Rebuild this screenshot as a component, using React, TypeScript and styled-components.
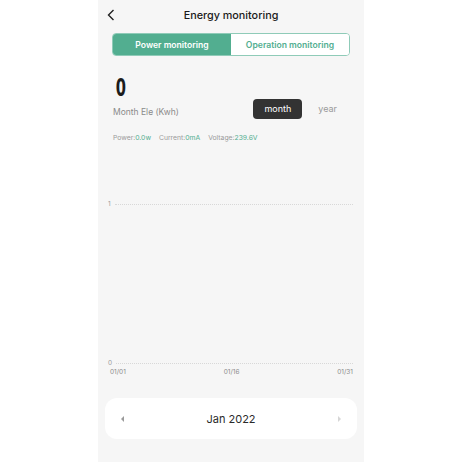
import styled, { createGlobalStyle } from "styled-components";

const Global = createGlobalStyle`
  html, body { margin: 0; padding: 0; background: #ffffff; }
  body { font-family: Inter, "Noto Sans", sans-serif; }
`;

const teal = "#52ae90";

const Page = styled.div`
  width: 462px;
  height: 462px;
  display: flex;
  justify-content: center;
`;

const Phone = styled.div`
  width: 266px;
  height: 462px;
  background: #f6f6f6;
  display: flex;
  flex-direction: column;
`;

const Header = styled.div`
  height: 30px;
  display: flex;
  align-items: center;
  justify-content: center;
  position: relative;
  font-size: 10.8px;
  font-weight: 500;
  color: #1a1a1a;
`;

const Back = styled.svg`
  position: absolute;
  left: 9px;
  top: 9px;
`;

const Segment = styled.div`
  margin: 3px 14px 0 14px;
  height: 23px;
  display: flex;
  border: 1px solid #8fcbb8;
  border-radius: 4px;
  overflow: hidden;
  background: #fff;
  box-sizing: border-box;
`;

const Tab = styled.div<{ $active?: boolean }>`
  flex: 1;
  display: flex;
  align-items: center;
  justify-content: center;
  font-size: 8.6px;
  font-weight: 600;
  color: ${(p) => (p.$active ? "#fff" : teal)};
  background: ${(p) => (p.$active ? teal : "#fff")};
`;

const Summary = styled.div`
  display: flex;
  align-items: flex-end;
  justify-content: space-between;
  padding: 22px 27px 0 15px;
`;

const BigValue = styled.div`
  font-family: "DejaVu Sans Condensed", "DejaVu Sans", sans-serif;
  font-size: 24px;
  font-weight: 700;
  line-height: 20px;
  height: 20px;
  color: #1c1c1c;
  transform: scaleX(0.68);
  transform-origin: left;
  padding-left: 4px;
`;

const Caption = styled.div`
  font-size: 8.5px;
  color: #8a8a8a;
  margin-top: 9px;
`;

const Periods = styled.div`
  display: flex;
  align-items: center;
  gap: 16px;
  margin-bottom: -2px;
`;

const Period = styled.div<{ $active?: boolean }>`
  font-size: 9px;
  color: ${(p) => (p.$active ? "#fff" : "#9a9a9a")};
  background: ${(p) => (p.$active ? "#333" : "transparent")};
  border-radius: 4px;
  padding: ${(p) => (p.$active ? "4px 11px" : "0")};
  line-height: 12px;
`;

const Readings = styled.div`
  display: flex;
  gap: 8px;
  padding: 16px 15px 0 15px;
  font-size: 6.8px;
  color: #9a9a9a;
`;

const Value = styled.span`
  color: ${teal};
`;

const Chart = styled.div`
  margin-top: 58px;
  padding: 0 11px 0 10px;
  display: flex;
  flex-direction: column;
`;

const GridRow = styled.div<{ $gap: number }>`
  display: flex;
  align-items: center;
  gap: 4px;
  margin-top: ${(p) => p.$gap}px;
  font-size: 6.5px;
  color: #9a9a9a;
  line-height: 8px;
`;

const Dots = styled.div`
  flex: 1;
  border-top: 1px dotted #d8d8d8;
`;

const Axis = styled.div`
  display: flex;
  justify-content: space-between;
  font-size: 6.5px;
  color: #8a8a8a;
  padding: 1px 0 0 2px;
`;

const Picker = styled.div`
  margin: 22px 7px 0 7px;
  height: 41px;
  background: #fff;
  border-radius: 12px;
  display: flex;
  align-items: center;
  justify-content: space-between;
  padding: 0 16px;
  font-size: 11px;
  color: #2a2a2a;
`;

const Arrow = styled.span<{ $dim?: boolean }>`
  width: 0;
  height: 0;
  border-top: 3px solid transparent;
  border-bottom: 3px solid transparent;
  ${(p) =>
    p.$dim
      ? "border-left: 3px solid #d6d6d6;"
      : "border-right: 3px solid #9a9a9a;"}
`;

export default function App() {
  return (
    <Page>
      <Global />
      <Phone>
        <Header>
          <Back width="8" height="12" viewBox="0 0 8 12">
            <path d="M6.5 1 L1.5 6 L6.5 11" fill="none" stroke="#222" strokeWidth="1.4" />
          </Back>
          Energy monitoring
        </Header>
        <Segment>
          <Tab $active>Power monitoring</Tab>
          <Tab>Operation monitoring</Tab>
        </Segment>
        <Summary>
          <div>
            <BigValue>0</BigValue>
            <Caption>Month Ele (Kwh)</Caption>
          </div>
          <Periods>
            <Period $active>month</Period>
            <Period>year</Period>
          </Periods>
        </Summary>
        <Readings>
          <span>
            Power:<Value>0.0w</Value>
          </span>
          <span>
            Current:<Value>0mA</Value>
          </span>
          <span>
            Voltage:<Value>239.6V</Value>
          </span>
        </Readings>
        <Chart>
          <GridRow $gap={0}>
            <span>1</span>
            <Dots />
          </GridRow>
          <GridRow $gap={151}>
            <span>0</span>
            <Dots />
          </GridRow>
          <Axis>
            <span>01/01</span>
            <span>01/16</span>
            <span>01/31</span>
          </Axis>
        </Chart>
        <Picker>
          <Arrow />
          <span>Jan 2022</span>
          <Arrow $dim />
        </Picker>
      </Phone>
    </Page>
  );
}
